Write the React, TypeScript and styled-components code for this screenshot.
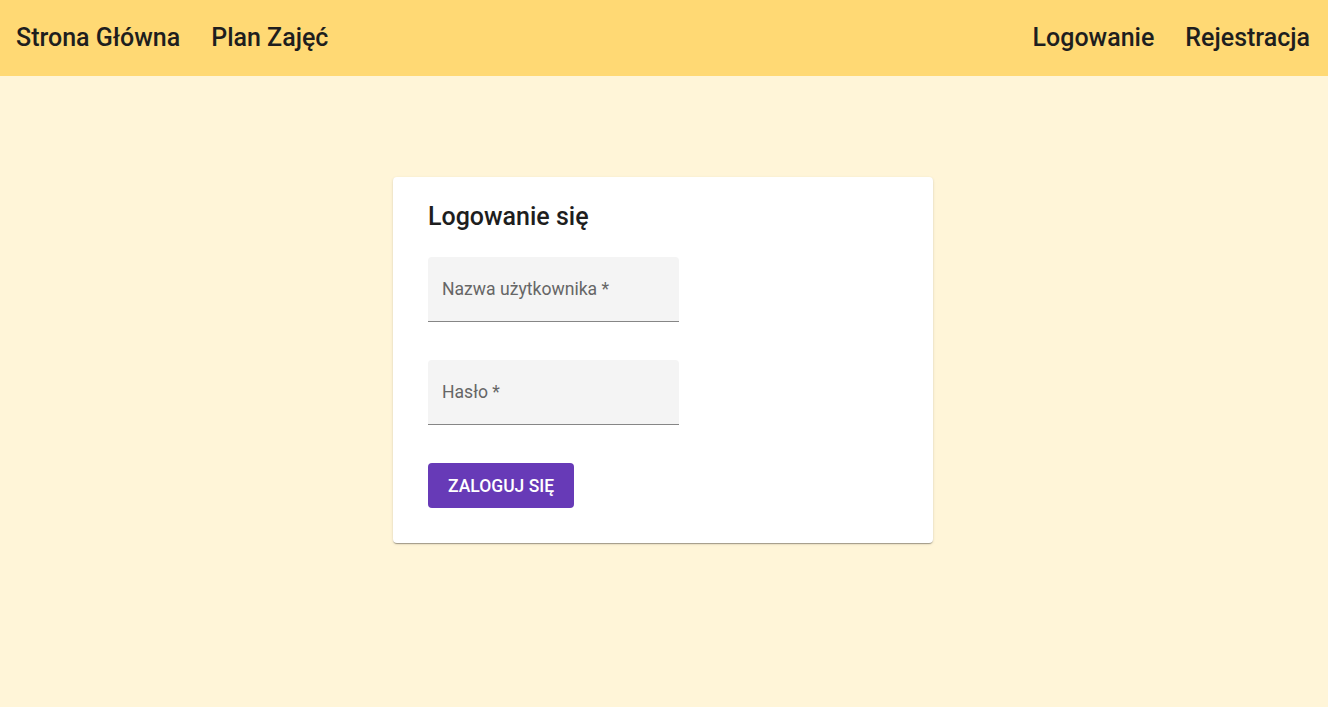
import styled, { createGlobalStyle } from "styled-components";

const COLOR = {
    HEADER: "#ffd974",
    PAGE: "#fff5d8",
    TEXT: "#1e1e1e",
    PRIMARY: "#673ab7",
    FIELD: "#f4f4f4",
};

const GlobalStyle = createGlobalStyle`
    * { box-sizing: border-box; }
    body {
        margin: 0;
        font-family: Roboto, "Noto Sans", sans-serif;
        background-color: ${COLOR.PAGE};
    }
`;

const Page = styled.div`
    min-height: 707px;
    background-color: ${COLOR.PAGE};
`;

const Header = styled.header`
    height: 76px;
    background-color: ${COLOR.HEADER};
    display: flex;
    align-items: center;
    justify-content: space-between;
    padding: 0 18px 2px 16px;
`;

const NavGroup = styled.nav`
    display: flex;
    gap: 31px;
`;

const NavLink = styled.a`
    font-size: 25px;
    font-weight: 500;
    color: ${COLOR.TEXT};
    text-decoration: none;
    cursor: pointer;
`;

const Content = styled.main`
    display: flex;
    justify-content: center;
    padding: 101px 2px 0 0;
`;

const Card = styled.form`
    width: 540px;
    background: #fff;
    border-radius: 4px;
    box-shadow: 0 2px 1px -1px rgba(0, 0, 0, 0.2), 0 1px 1px 0 rgba(0, 0, 0, 0.14),
        0 1px 3px 0 rgba(0, 0, 0, 0.12);
    padding: 26px 35px 35px;
    display: flex;
    flex-direction: column;
    align-items: flex-start;
`;

const Title = styled.h2`
    margin: 0 0 26px;
    font-size: 25px;
    font-weight: 500;
    color: ${COLOR.TEXT};
    line-height: 28px;
`;

const Field = styled.label`
    width: 251px;
    height: 65px;
    background: ${COLOR.FIELD};
    border-radius: 4px 4px 0 0;
    border-bottom: 1px solid rgba(0, 0, 0, 0.45);
    display: flex;
    align-items: center;
    padding: 0 14px;
    font-size: 17.6px;
    color: #666;
    margin-bottom: 38px;
`;

const SubmitButton = styled.button`
    height: 45px;
    padding: 0 20px;
    border: none;
    border-radius: 4px;
    background: ${COLOR.PRIMARY};
    color: #fff;
    font-family: Roboto, sans-serif;
    font-size: 17.5px;
    font-weight: 500;
    text-transform: uppercase;
    cursor: pointer;
`;

const App = () => {
    return (
        <Page>
            <GlobalStyle />
            <Header>
                <NavGroup>
                    <NavLink>Strona Główna</NavLink>
                    <NavLink>Plan Zajęć</NavLink>
                </NavGroup>
                <NavGroup>
                    <NavLink>Logowanie</NavLink>
                    <NavLink>Rejestracja</NavLink>
                </NavGroup>
            </Header>
            <Content>
                <Card onSubmit={(e) => e.preventDefault()}>
                    <Title>Logowanie się</Title>
                    <Field>Nazwa użytkownika *</Field>
                    <Field>Hasło *</Field>
                    <SubmitButton type="submit">Zaloguj się</SubmitButton>
                </Card>
            </Content>
        </Page>
    );
};

export default App;
